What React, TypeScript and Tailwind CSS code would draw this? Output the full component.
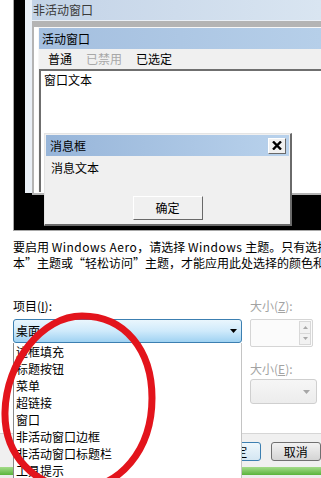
import React from 'react';

const ITEMS = ['边框填充', '标题按钮', '菜单', '超链接', '窗口', '非活动窗口边框', '非活动窗口标题栏', '工具提示'];

// Preview canvas: inactive window, active window and message box
function Preview() {
  return (
    <div className="relative h-[232px] bg-white">
      <div className="absolute left-[13px] top-0 right-0 h-[231px] border-l border-b border-[#a8a8a8] bg-black" />

      {/* inactive window */}
      <div className="absolute left-[25px] top-0 right-0 h-[193px] bg-[#eaf0f7]" />
      <div className="absolute left-[32px] top-0 right-0 h-[20px] bg-gradient-to-r from-[#c3d3e7] to-[#d9e5f1] pl-[1px] leading-[19px] text-[#3a3a3a]">
        非活动窗口
      </div>
      <div className="absolute left-[32px] top-[21px] right-0 h-[174px] bg-[#b4b4b4]" />
      <div className="absolute left-[34px] top-[27px] right-0 h-[166px] bg-white" />

      {/* active window */}
      <div className="absolute left-[38px] top-[27px] right-0 h-[165px] flex flex-col border-t border-l border-[#f7f7f7] bg-[#f0f0f0]">
        <div className="h-[21px] bg-gradient-to-r from-[#a4bfdf] to-[#b6cfe9] pl-[3px] leading-[21px]">活动窗口</div>
        <div className="h-[20px] flex items-center gap-[14px] pl-[9px] leading-[20px]">
          <span>普通</span>
          <span className="text-[#a8a8a8]">已禁用</span>
          <span>已选定</span>
        </div>
        <div className="flex-1 border-t-2 border-l-2 border-[#6f6f6f] bg-white pl-[3px] pt-[1px] leading-[16px]">
          窗口文本
        </div>
      </div>

      {/* message box */}
      <div className="absolute left-[44px] top-[133px] w-[248px] h-[93px] flex flex-col border-t border-l border-[#e4e4e4] border-r-2 border-b-2 border-r-[#6a6a6a] border-b-[#6a6a6a] bg-[#f0f0f0] p-[1px]">
        <div className="h-[21px] flex items-center justify-between bg-gradient-to-r from-[#97b5d9] to-[#b9d2ec] pl-[4px] pr-[3px]">
          <span className="leading-[21px]">消息框</span>
          <span className="w-[18px] h-[16px] flex items-center justify-center bg-[#f0f0f0] border border-t-white border-l-white border-r-[#696969] border-b-[#696969]">
            <svg width="10" height="9" viewBox="0 0 10 9">
              <path d="M1 0.5 L9 8.5 M9 0.5 L1 8.5" stroke="#000" strokeWidth="2.4" />
            </svg>
          </span>
        </div>
        <div className="pl-[5px] pt-[4px] leading-[16px]">消息文本</div>
        <div className="mt-auto mb-[3px] self-center w-[70px] h-[24px] flex items-center justify-center border border-t-white border-l-white border-r-[#696969] border-b-[#696969] bg-[#f0f0f0]">
          确定
        </div>
      </div>
    </div>
  );
}

function Arrow({ color }: { color: string }) {
  return (
    <svg width="7" height="4" viewBox="0 0 7 4">
      <path d="M0 0 H7 L3.5 4 Z" fill={color} />
    </svg>
  );
}

export default function App() {
  return (
    <div className="relative w-[321px] h-[478px] overflow-hidden bg-white font-['Noto_Sans_CJK_SC',sans-serif] text-[12px] text-black">
      <Preview />

      <div className="pl-[13px] pt-[7px] leading-[16px]">
        <div className="whitespace-nowrap">
          要启用 <span className="tracking-[0.5px]">Windows Aero</span>，请选择 <span className="tracking-[0.5px]">Windows</span> 主题。只有选择了“Windows 经典”、“Windows 7 基
        </div>
        <div className="whitespace-nowrap">本”主题或“轻松访问”主题，才能应用此处选择的颜色和大小。</div>
      </div>

      {/* item / size controls */}
      <div className="mt-[27px] h-[135px] flex pl-[13px]">
        <div className="w-[229px]">
          <div className="leading-[16px]">
            项目(<span className="underline">I</span>):
          </div>
          <div className="mt-[5px] h-[24px] flex items-center justify-between rounded-[3px] border border-[#3c7fb1] bg-gradient-to-b from-[#eaf6fd] via-[#cfeafb] to-[#9fd2f2] pl-[2px] pr-[4px]">
            <span className="leading-[22px]">桌面</span>
            <Arrow color="#000" />
          </div>
        </div>

        <div className="ml-[8px] w-[67px] text-[#a3a3a3]">
          <div className="leading-[16px]">
            大小(<span className="underline">Z</span>):
          </div>
          <div className="mt-[5px] w-[63px] h-[28px] flex justify-end rounded-[2px] border border-[#d5d5d5] bg-[#fbfbfb] p-[1px]">
            <div className="w-[12px] flex flex-col">
              <div className="flex-1 flex items-center justify-center border border-[#d8d8d8] bg-[#f2f2f2]">
                <svg width="5" height="3" viewBox="0 0 5 3"><path d="M0 3 H5 L2.5 0 Z" fill="#a8a8a8" /></svg>
              </div>
              <div className="flex-1 flex items-center justify-center border border-t-0 border-[#d8d8d8] bg-[#f2f2f2]">
                <svg width="5" height="3" viewBox="0 0 5 3"><path d="M0 0 H5 L2.5 3 Z" fill="#a8a8a8" /></svg>
              </div>
            </div>
          </div>
          <div className="mt-[14px] leading-[16px]">
            大小(<span className="underline">E</span>):
          </div>
          <div className="mt-[2px] h-[25px] flex items-center justify-end rounded-[3px] border border-[#cfcfcf] bg-gradient-to-b from-[#f6f6f6] to-[#ececec] pr-[6px]">
            <Arrow color="#a6a6a6" />
          </div>
        </div>
      </div>

      {/* dialog footer behind the open list */}
      <div className="h-[34px] border-t border-[#d6d6d6] bg-[#f0f0f0] pt-[8px] pl-[210px] flex gap-[10px]">
        <div className="w-[72px] h-[19px] flex items-center justify-center rounded-[3px] border border-[#3c7fb1] bg-gradient-to-b from-[#eef7fc] to-[#d4e6f2] leading-[17px]">
          确定
        </div>
        <div className="w-[72px] h-[19px] flex items-center justify-center rounded-[3px] border border-[#707070] bg-gradient-to-b from-[#f2f2f2] to-[#d4d4d4] leading-[17px]">
          取消
        </div>
      </div>
      <div className="h-[8px] bg-gradient-to-b from-[#a3db88] to-[#58b43a]" />
      <div className="h-[10px] bg-[#ececec]" />

      {/* open dropdown list */}
      <div className="absolute left-[13px] top-[343px] w-[229px] h-[140px] border-x border-[#8a8a8a] border-r-[#c4c4c4] bg-white">
        {ITEMS.map((item) => (
          <div key={item} className="h-[17px] pl-[2px] leading-[17px] whitespace-nowrap">
            {item}
          </div>
        ))}
      </div>

      {/* hand-drawn red circle */}
      <svg className="absolute left-0 top-0 pointer-events-none" width="321" height="478" viewBox="0 0 321 478">
        <path
          d="M82 316 C125 316 152 350 152 398 C152 450 120 488 78 488 C35 488 4 455 5 412 C6 362 42 316 82 316 Z"
          fill="none"
          stroke="#e3141c"
          strokeWidth="7"
        />
      </svg>
    </div>
  );
}
